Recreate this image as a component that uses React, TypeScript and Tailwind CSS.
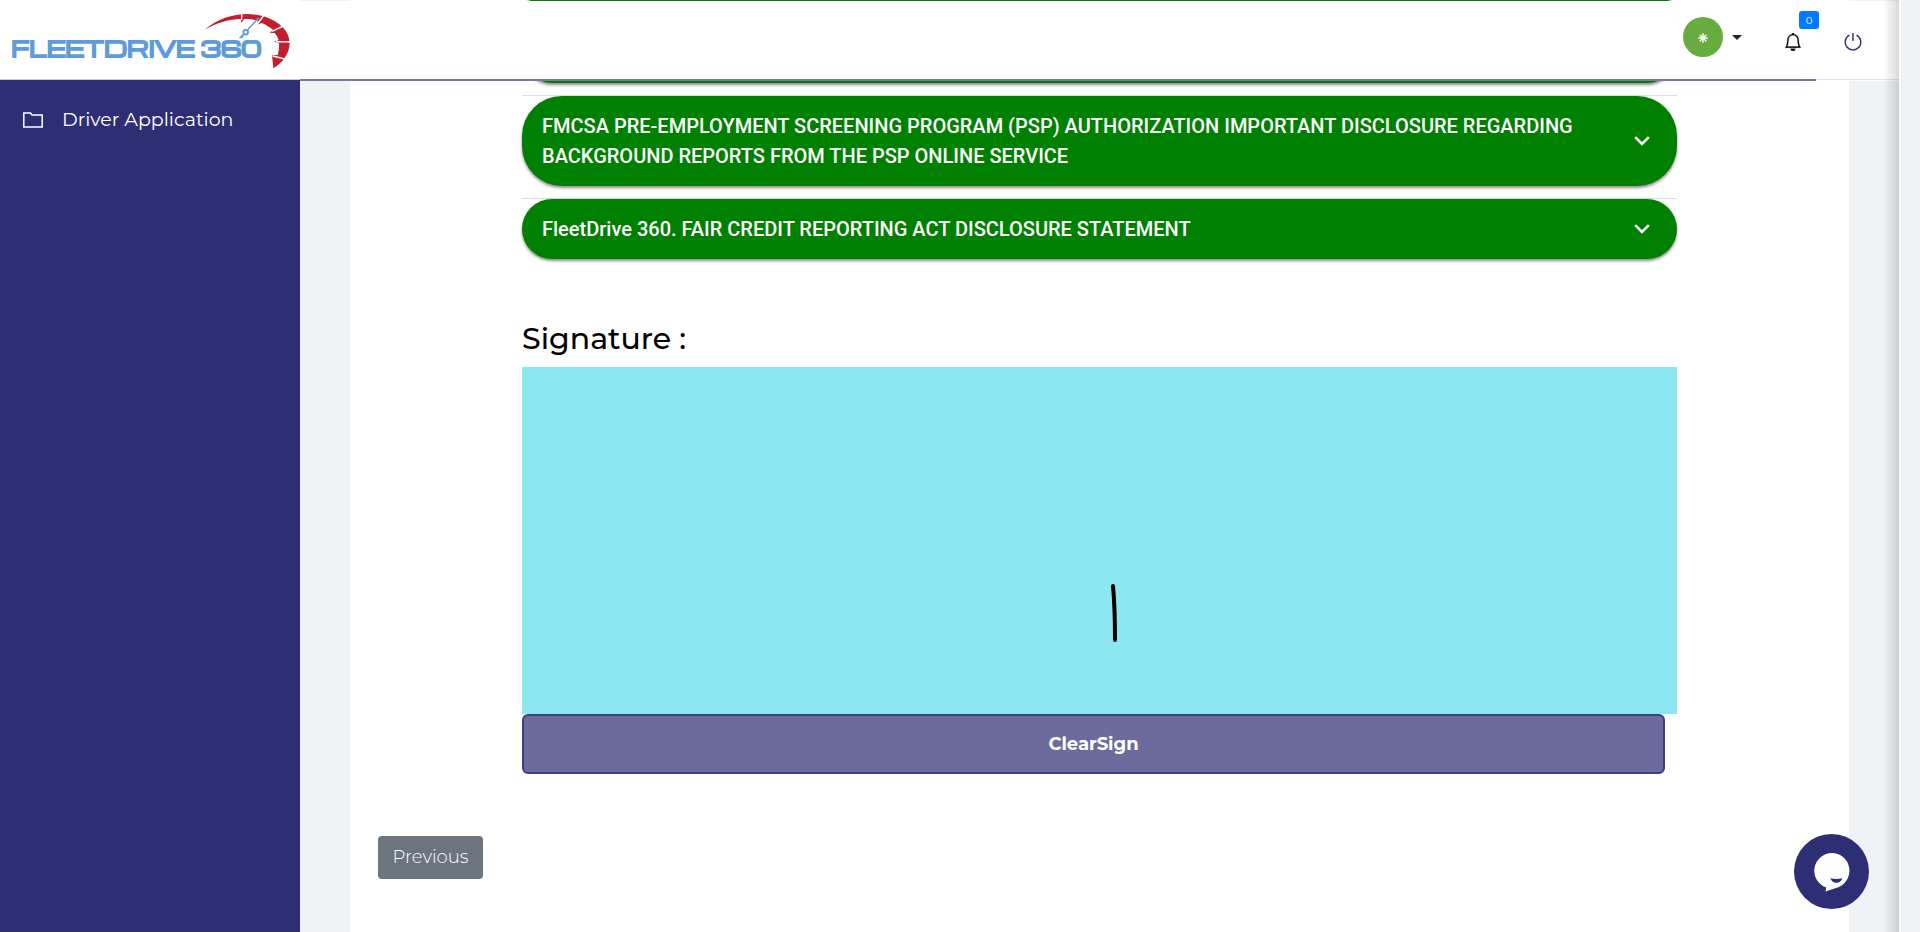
import React from "react";
import { BsBell } from "react-icons/bs";

const uiFont = "font-['Montserrat','Inter',sans-serif]";

function Logo() {
  return (
    <a href="#home" aria-label="FleetDrive 360" className="block h-20 w-[300px] shrink-0 border-b border-[#c8c8cc] bg-white">
      <svg viewBox="0 0 900 240" className="h-20 w-[300px]">
        <text x="34" y="172" fontFamily="Michroma, Orbitron, Montserrat, 'DejaVu Sans', sans-serif" fontWeight="700" fontSize="64" fill="#5f9bd8" stroke="#5f9bd8" strokeWidth="4">FLEETDRIVE 360</text>
        <path
          fill="#c41e2e"
          d="M614 89C650 57 700 42 740 42C815 43 869 82 869 130C868 164 846 190 820 205L816 166L833 165C837 150 838 140 837 130L822 125L836 121C834 112 829 104 824 99L808 98L820 91C808 80 797 74 785 69L769 76L774 62C760 58 745 56 733 57L724 68L722 57C690 57 650 68 614 89Z"
        />
        <g stroke="#fff" strokeWidth="4.5">
          <path d="M725 38V60M794 42L768 78M850 78L816 94M872 125H828M858 178L818 168" />
        </g>
        <g stroke="#5f9bd8" fill="none">
          <path d="M776 53L742 91" strokeWidth="4.5" />
          <circle cx="737" cy="97" r="7" strokeWidth="5.5" />
          <path d="M733 102L727 114L717 114L731 99Z" strokeWidth="1" fill="#5f9bd8" />
        </g>
      </svg>
    </a>
  );
}

function Sidebar() {
  return (
    <aside className="flex w-[300px] shrink-0 flex-col bg-[#2d2e74]">
      <Logo />
      <nav className="pt-5">
        <a href="#application" className="flex h-10 items-center gap-[19px] pl-[23px] text-[19px] text-white">
          <svg viewBox="0 0 20 16" className="h-4 w-5" fill="none" stroke="currentColor" strokeWidth="1.5">
            <path d="M.8 1H7.5L9 3H19.2V15H.8Z" />
          </svg>
          Driver Application
        </a>
      </nav>
    </aside>
  );
}

function Header() {
  return (
    <header className="absolute inset-x-0 top-px z-10 h-20 bg-white">
      <div className="flex h-[79px] items-start justify-end border-b border-[#dde5ec] pr-[37px]">
        <button aria-label="Account" className="mt-4 flex items-center gap-[9px]">
          <span className="flex size-10 items-center justify-center rounded-full bg-[#68ac3f]">
            <svg viewBox="0 0 10 10" className="mt-0.5 size-[10px]" stroke="#fff" strokeWidth="1.4">
              <path d="M5 .3V9.7M.3 5H9.7M1.7 1.7L8.3 8.3M8.3 1.7L1.7 8.3" />
            </svg>
          </span>
          <span className="border-x-[5px] border-t-[5px] border-x-transparent border-t-[#212529]" />
        </button>
        <button aria-label="Notifications" className="relative mt-8 ml-[42px] text-black">
          <BsBell size={18} stroke="currentColor" strokeWidth={0.3} />
          <span className="absolute -top-[22px] left-[15px] flex h-[18px] w-5 items-center justify-center rounded-[3px] bg-[#007bff] text-[10px] text-white">0</span>
        </button>
        <button aria-label="Log out" className="mt-8 ml-[42px] text-[#2d2e74]">
          <svg viewBox="0 0 18 18" className="size-[18px]" fill="none" stroke="currentColor" strokeWidth="1.4">
            <path d="M9 0V8M5.4 2.2A7.8 7.8 0 1 0 12.6 2.2" />
          </svg>
        </button>
      </div>
      <div className="-mt-px mr-[83px] h-0.5 bg-[#7b78a8]" />
    </header>
  );
}

function Panel({ title }: { title?: string }) {
  return (
    <div className="border-t border-[#dedede]">
      <button className="flex min-h-[60px] w-full items-center justify-between rounded-[40px] bg-[#008000] py-[15px] pr-[27px] pl-5 text-left font-['Roboto',sans-serif] text-[20px] leading-[30px] font-medium text-white shadow-[0_2px_3px_rgba(0,0,0,0.45)]">
        <span className="max-w-[1060px]">{title}</span>
        <svg viewBox="0 0 16 10" className="h-[10px] w-4" fill="none" stroke="currentColor" strokeWidth="2.6">
          <path d="M1.2 1.2L8 8L14.8 1.2" />
        </svg>
      </button>
    </div>
  );
}

export default function App() {
  return (
    <div className={`flex h-screen overflow-hidden bg-[#eff3f6] ${uiFont}`}>
      <Sidebar />
      <div className="relative flex min-w-0 flex-1 flex-col overflow-hidden">
        <Header />
        <main className="flex flex-1 flex-col px-[50px]">
          <div className="flex flex-1 flex-col bg-white">
            <div className="mx-[172px]">
              <div className="-mt-[51px] flex flex-col gap-3">
                <Panel />
                <Panel />
                <Panel title="FMCSA PRE-EMPLOYMENT SCREENING PROGRAM (PSP) AUTHORIZATION IMPORTANT DISCLOSURE REGARDING BACKGROUND REPORTS FROM THE PSP ONLINE SERVICE" />
                <Panel title="FleetDrive 360. FAIR CREDIT REPORTING ACT DISCLOSURE STATEMENT" />
              </div>
              <h2 className="mt-[60px] text-[30px] leading-10 font-medium text-black">Signature :</h2>
              <div className="mt-2 h-[347px] bg-[#8de7f0]">
                <svg viewBox="0 0 1155 347" className="h-full w-full" role="img" aria-label="Signature">
                  <path d="M591 219Q593 240 593 273" fill="none" stroke="#000" strokeWidth="4" strokeLinecap="round" />
                </svg>
              </div>
              <div className="pr-3">
                <button className="block h-[60px] w-full rounded-md border-2 border-[#3e3f80] bg-[#6c6b9d] text-[18px] font-bold text-white">ClearSign</button>
              </div>
            </div>
            <div className="mt-[62px] pl-7">
              <button className="h-[43px] w-[105px] rounded-[4px] bg-[#6c757d] text-[18px] font-light text-white">Previous</button>
            </div>
          </div>
        </main>
        <div className="pointer-events-none absolute inset-y-0 right-0 z-20 w-4 bg-linear-to-r from-transparent to-black/15" />
        <button aria-label="Open chat" className="absolute right-[30px] bottom-[23px] flex size-[75px] items-center justify-center rounded-full bg-[#2d2e74]">
          <svg viewBox="0 0 36 39" className="mt-px h-[39px] w-9">
            <path d="M18 0A17.8 17.8 0 0 0 12.2 34.6L11.5 38.5L25 34A17.8 17.8 0 0 0 18 0Z" fill="#fff" />
            <path d="M16.3 25.3Q22.3 26.5 28.5 25.3Q26.5 29.8 22.4 29.8Q18.3 29.8 16.3 25.3Z" fill="#2d2e74" />
          </svg>
        </button>
      </div>
      <div className="w-[21px] shrink-0 border-l-2 border-white bg-[#eff3f6]" />
    </div>
  );
}
